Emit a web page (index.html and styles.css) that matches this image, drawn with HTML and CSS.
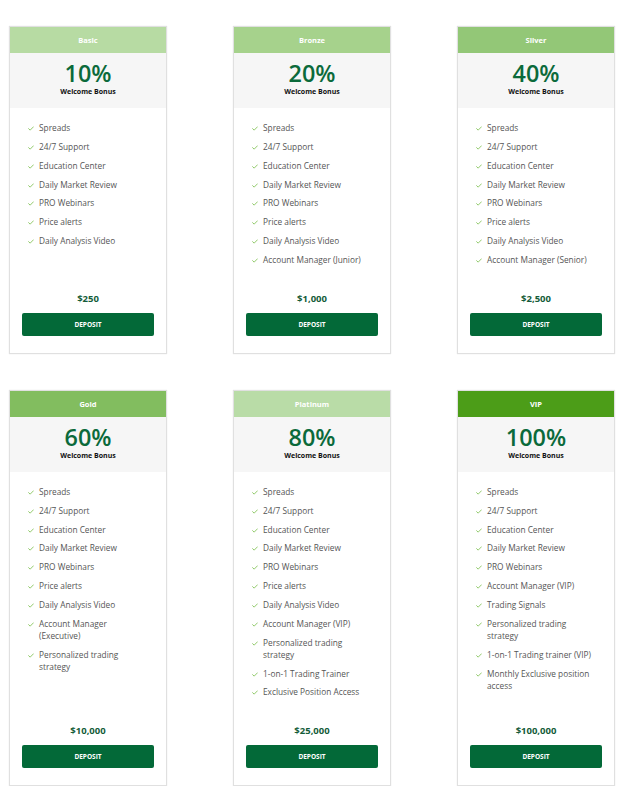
FILE: index.html
```html
<!DOCTYPE html>
<html>
<head>
<meta charset="utf-8">
<link rel="stylesheet" href="styles.css">
</head>
<body>
<svg width="0" height="0" class="defs">
  <symbol id="chk" viewBox="0 0 8 6"><polyline points="0.8,3.2 2.9,5.2 7.2,0.8" fill="none" stroke="currentColor" stroke-width="1.1" stroke-linecap="round" stroke-linejoin="round"/></symbol>
</svg>
<div class="plans">
  <div class="card">
    <div class="head head-basic">Basic</div>
    <div class="bonus"><div class="pct">10%</div><div class="wb">Welcome Bonus</div></div>
    <ul class="features">
      <li><svg class="ck"><use href="#chk"/></svg>Spreads</li>
      <li><svg class="ck"><use href="#chk"/></svg>24/7 Support</li>
      <li><svg class="ck"><use href="#chk"/></svg>Education Center</li>
      <li><svg class="ck"><use href="#chk"/></svg>Daily Market Review</li>
      <li><svg class="ck"><use href="#chk"/></svg>PRO Webinars</li>
      <li><svg class="ck"><use href="#chk"/></svg>Price alerts</li>
      <li><svg class="ck"><use href="#chk"/></svg>Daily Analysis Video</li>
    </ul>
    <div class="foot"><div class="price">$250</div><a class="btn">DEPOSIT</a></div>
  </div>
  <div class="card">
    <div class="head head-bronze">Bronze</div>
    <div class="bonus"><div class="pct">20%</div><div class="wb">Welcome Bonus</div></div>
    <ul class="features">
      <li><svg class="ck"><use href="#chk"/></svg>Spreads</li>
      <li><svg class="ck"><use href="#chk"/></svg>24/7 Support</li>
      <li><svg class="ck"><use href="#chk"/></svg>Education Center</li>
      <li><svg class="ck"><use href="#chk"/></svg>Daily Market Review</li>
      <li><svg class="ck"><use href="#chk"/></svg>PRO Webinars</li>
      <li><svg class="ck"><use href="#chk"/></svg>Price alerts</li>
      <li><svg class="ck"><use href="#chk"/></svg>Daily Analysis Video</li>
      <li><svg class="ck"><use href="#chk"/></svg>Account Manager (Junior)</li>
    </ul>
    <div class="foot"><div class="price">$1,000</div><a class="btn">DEPOSIT</a></div>
  </div>
  <div class="card">
    <div class="head head-silver">Silver</div>
    <div class="bonus"><div class="pct">40%</div><div class="wb">Welcome Bonus</div></div>
    <ul class="features">
      <li><svg class="ck"><use href="#chk"/></svg>Spreads</li>
      <li><svg class="ck"><use href="#chk"/></svg>24/7 Support</li>
      <li><svg class="ck"><use href="#chk"/></svg>Education Center</li>
      <li><svg class="ck"><use href="#chk"/></svg>Daily Market Review</li>
      <li><svg class="ck"><use href="#chk"/></svg>PRO Webinars</li>
      <li><svg class="ck"><use href="#chk"/></svg>Price alerts</li>
      <li><svg class="ck"><use href="#chk"/></svg>Daily Analysis Video</li>
      <li><svg class="ck"><use href="#chk"/></svg>Account Manager (Senior)</li>
    </ul>
    <div class="foot"><div class="price">$2,500</div><a class="btn">DEPOSIT</a></div>
  </div>
  <div class="card">
    <div class="head head-gold">Gold</div>
    <div class="bonus"><div class="pct">60%</div><div class="wb">Welcome Bonus</div></div>
    <ul class="features">
      <li><svg class="ck"><use href="#chk"/></svg>Spreads</li>
      <li><svg class="ck"><use href="#chk"/></svg>24/7 Support</li>
      <li><svg class="ck"><use href="#chk"/></svg>Education Center</li>
      <li><svg class="ck"><use href="#chk"/></svg>Daily Market Review</li>
      <li><svg class="ck"><use href="#chk"/></svg>PRO Webinars</li>
      <li><svg class="ck"><use href="#chk"/></svg>Price alerts</li>
      <li><svg class="ck"><use href="#chk"/></svg>Daily Analysis Video</li>
      <li><svg class="ck"><use href="#chk"/></svg>Account Manager (Executive)</li>
      <li><svg class="ck"><use href="#chk"/></svg>Personalized trading strategy</li>
    </ul>
    <div class="foot"><div class="price">$10,000</div><a class="btn">DEPOSIT</a></div>
  </div>
  <div class="card">
    <div class="head head-platinum">Platinum</div>
    <div class="bonus"><div class="pct">80%</div><div class="wb">Welcome Bonus</div></div>
    <ul class="features">
      <li><svg class="ck"><use href="#chk"/></svg>Spreads</li>
      <li><svg class="ck"><use href="#chk"/></svg>24/7 Support</li>
      <li><svg class="ck"><use href="#chk"/></svg>Education Center</li>
      <li><svg class="ck"><use href="#chk"/></svg>Daily Market Review</li>
      <li><svg class="ck"><use href="#chk"/></svg>PRO Webinars</li>
      <li><svg class="ck"><use href="#chk"/></svg>Price alerts</li>
      <li><svg class="ck"><use href="#chk"/></svg>Daily Analysis Video</li>
      <li><svg class="ck"><use href="#chk"/></svg>Account Manager (VIP)</li>
      <li><svg class="ck"><use href="#chk"/></svg>Personalized trading strategy</li>
      <li><svg class="ck"><use href="#chk"/></svg>1-on-1 Trading Trainer</li>
      <li><svg class="ck"><use href="#chk"/></svg>Exclusive Position Access</li>
    </ul>
    <div class="foot"><div class="price">$25,000</div><a class="btn">DEPOSIT</a></div>
  </div>
  <div class="card">
    <div class="head head-vip">VIP</div>
    <div class="bonus"><div class="pct">100%</div><div class="wb">Welcome Bonus</div></div>
    <ul class="features">
      <li><svg class="ck"><use href="#chk"/></svg>Spreads</li>
      <li><svg class="ck"><use href="#chk"/></svg>24/7 Support</li>
      <li><svg class="ck"><use href="#chk"/></svg>Education Center</li>
      <li><svg class="ck"><use href="#chk"/></svg>Daily Market Review</li>
      <li><svg class="ck"><use href="#chk"/></svg>PRO Webinars</li>
      <li><svg class="ck"><use href="#chk"/></svg>Account Manager (VIP)</li>
      <li><svg class="ck"><use href="#chk"/></svg>Trading Signals</li>
      <li><svg class="ck"><use href="#chk"/></svg>Personalized trading strategy</li>
      <li><svg class="ck"><use href="#chk"/></svg>1-on-1 Trading trainer (VIP)</li>
      <li><svg class="ck"><use href="#chk"/></svg>Monthly Exclusive position access</li>
    </ul>
    <div class="foot"><div class="price">$100,000</div><a class="btn">DEPOSIT</a></div>
  </div>
</div>
</body>
</html>
```
FILE: styles.css
```css
html, body {
  margin: 0;
  padding: 0;
  background: #ffffff;
}
body {
  font-family: "Open Sans", "Noto Sans", sans-serif;
}
.defs {
  position: absolute;
  width: 0;
  height: 0;
}
.plans {
  display: grid;
  grid-template-columns: repeat(3, 158px);
  column-gap: 66px;
  row-gap: 36px;
  padding: 26px 0 0 9px;
}
.card {
  display: flex;
  flex-direction: column;
  border: 1px solid #e0e0e0;
  box-shadow: 0 0 1px rgba(0, 0, 0, 0.12);
  background: #fff;
}
.head {
  height: 26px;
  line-height: 26px;
  text-align: center;
  color: #fff;
  font-weight: 700;
  font-size: 7.5px;
}
.head-basic { background: #b7dba3; }
.head-bronze { background: #a6d28c; }
.head-silver { background: #93c777; }
.head-gold { background: #82bd5f; }
.head-platinum { background: #b9dca7; }
.head-vip { background: #4c9d18; }
.bonus {
  background: #f6f6f6;
  height: 55px;
  box-sizing: border-box;
  padding-top: 9px;
  text-align: center;
}
.pct {
  font-size: 23.4px;
  line-height: 22px;
  font-weight: 550;
  color: #0b6a3b;
}
.wb {
  margin-top: 3px;
  font-size: 7px;
  line-height: 10px;
  font-weight: 700;
  color: #111;
}
.features {
  list-style: none;
  margin: 0;
  padding: 14px 19px 0 18px;
}
.features li {
  position: relative;
  padding-left: 11px;
  font-size: 8.3px;
  line-height: 12px;
  color: #555;
  margin-bottom: 6.85px;
}
.features li:last-child {
  margin-bottom: 0;
}
.ck {
  position: absolute;
  left: 0;
  top: 4px;
  width: 6px;
  height: 5px;
  color: #7cbf4e;
}
.foot {
  margin-top: auto;
  padding: 27px 12px 17px;
  text-align: center;
}
.price {
  font-size: 9.5px;
  line-height: 12px;
  font-weight: 700;
  color: #145c39;
  margin-bottom: 8px;
}
.btn {
  display: block;
  height: 23px;
  line-height: 23px;
  background: #036938;
  border-radius: 2px;
  color: #fff;
  font-size: 6.5px;
  font-weight: 700;
  text-align: center;
}
```
